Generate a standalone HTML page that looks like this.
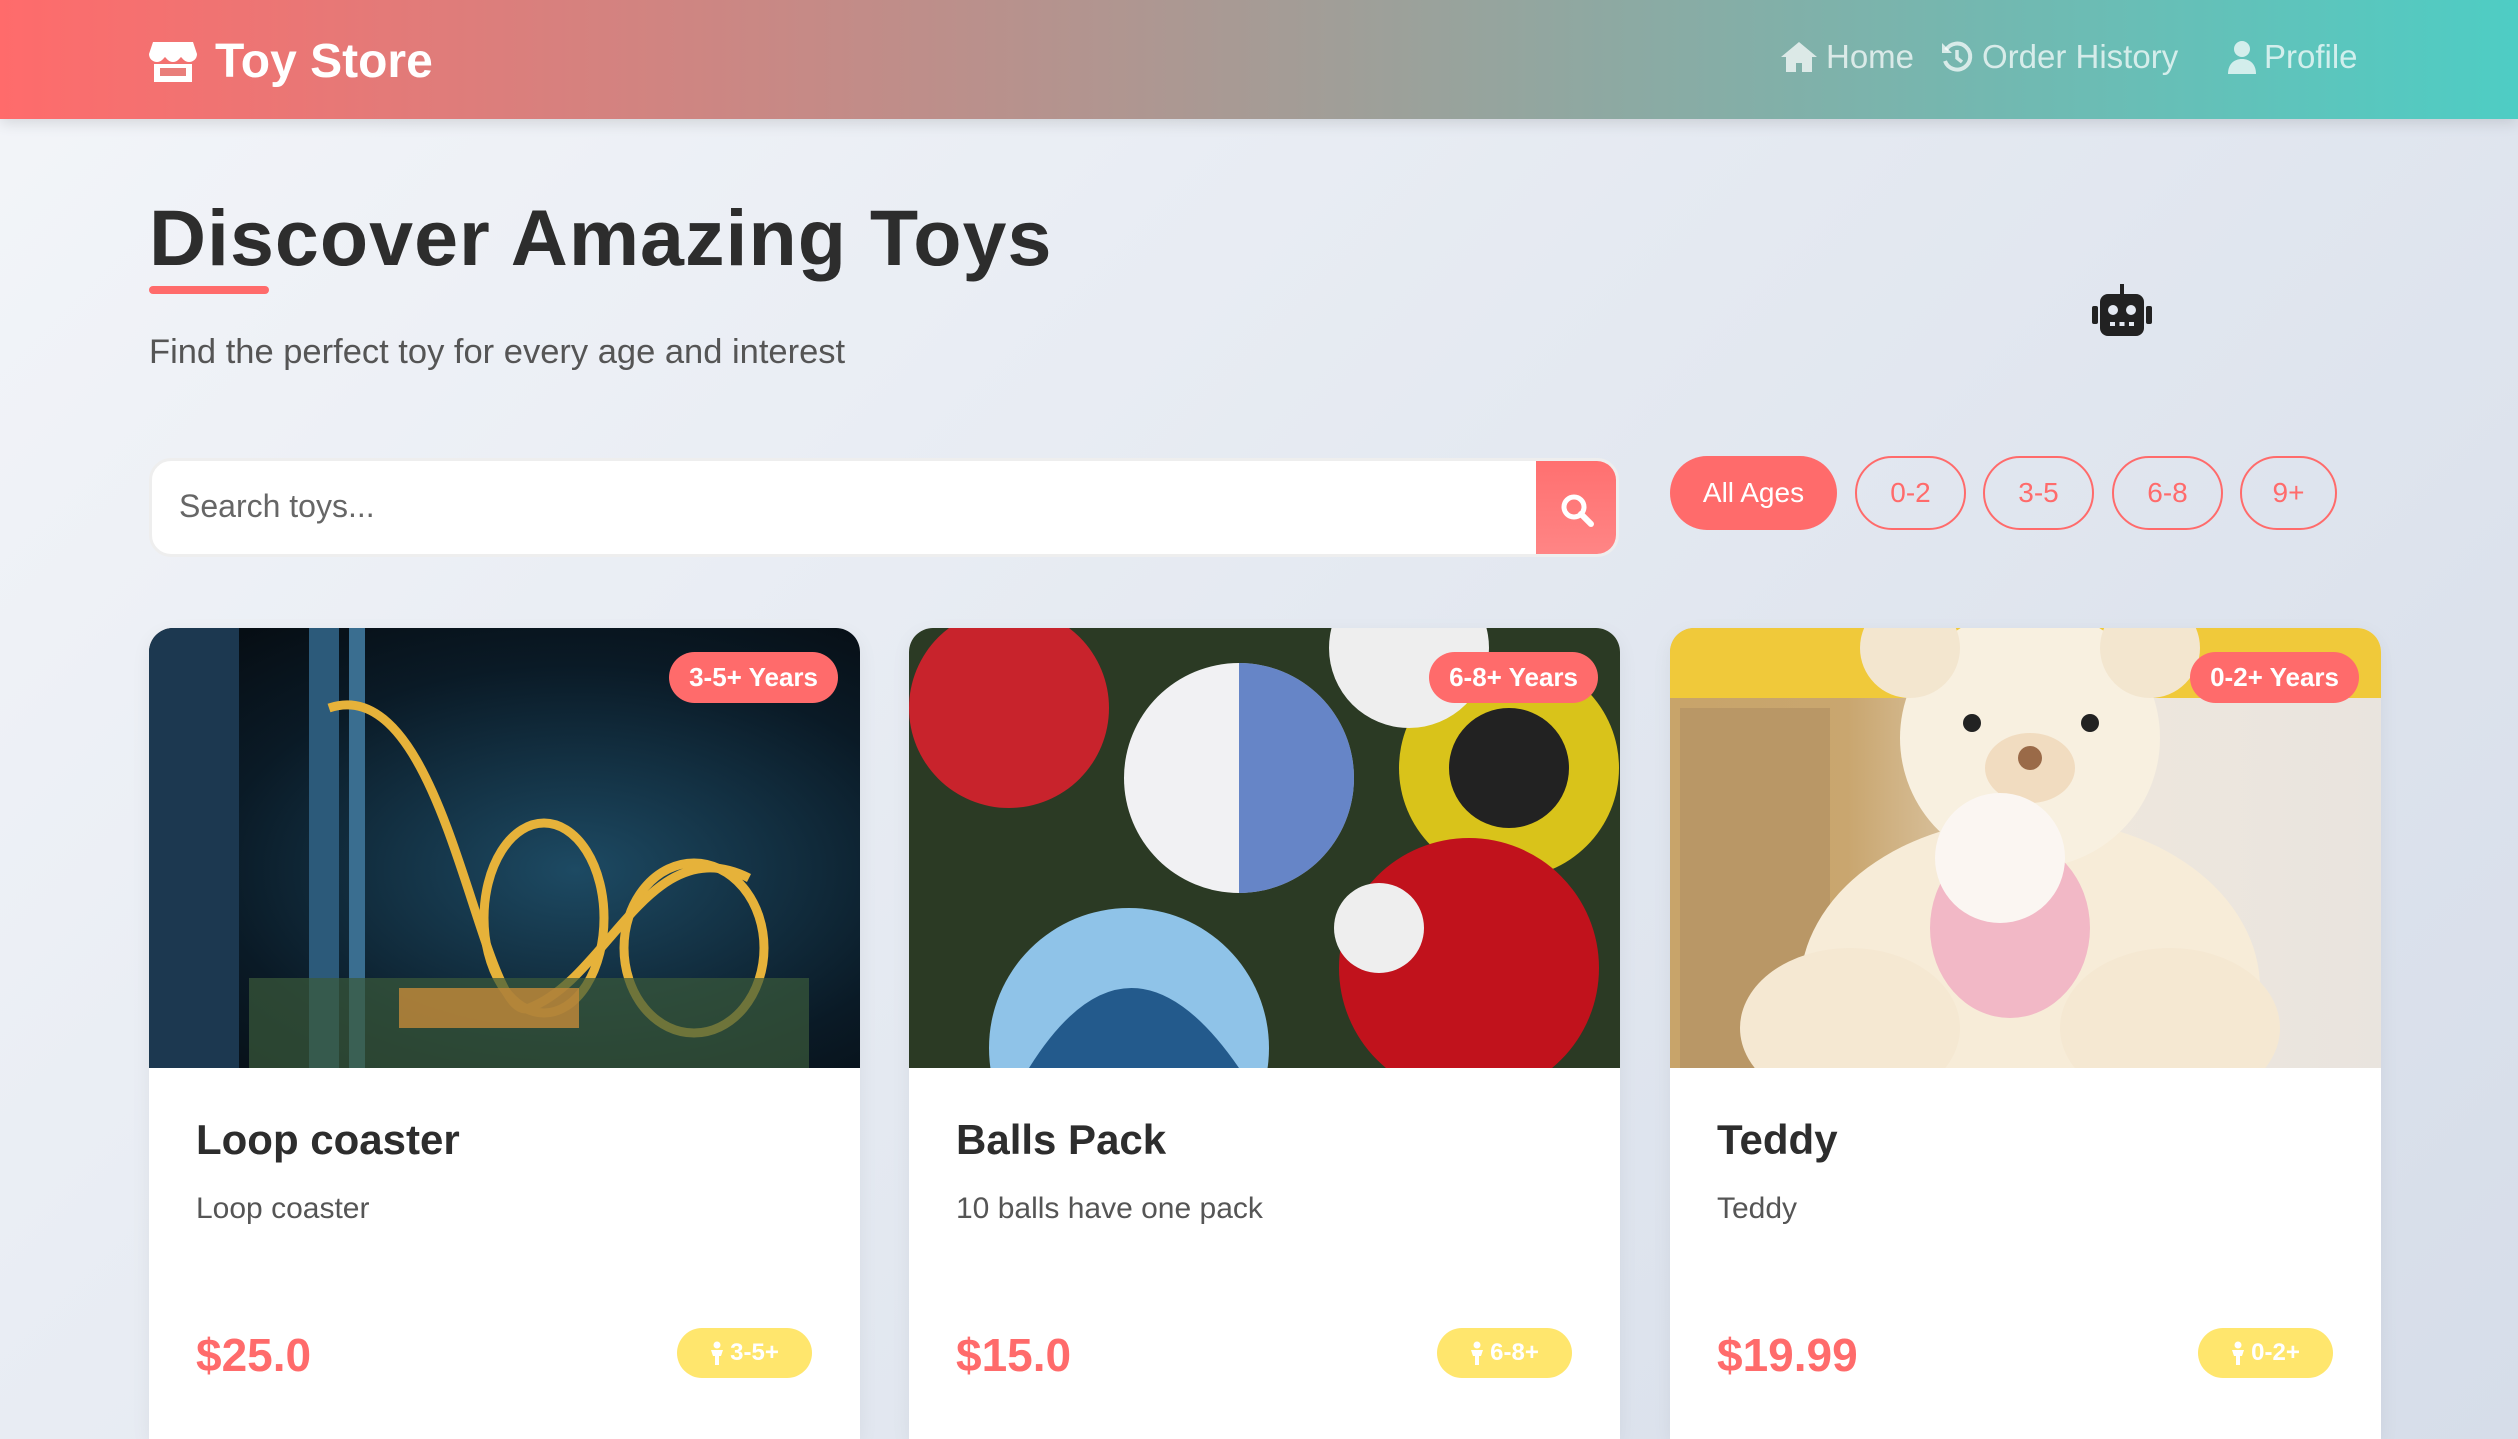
<!DOCTYPE html>
<html><head><meta charset="utf-8"><style>
*{box-sizing:border-box;margin:0;padding:0}
html{width:2518px;height:1439px;overflow:hidden}
body{width:2518px;height:1439px;overflow:hidden;font-family:"Liberation Sans",sans-serif;background:linear-gradient(135deg,#f3f5f9 0%,#e4e9f1 50%,#d6dde9 100%);position:relative;color:#333}
.hdr{position:absolute;left:0;top:0;width:2518px;height:119px;background:linear-gradient(90deg,#ff6b6b,#a69b95 50%,#4ecdc4);box-shadow:0 4px 14px rgba(0,0,0,.12)}
.logo{position:absolute;left:149px;top:34px;color:#fff;font-weight:bold;font-size:48px;display:flex;align-items:center;gap:18px}
.nav{position:absolute;top:38px;color:rgba(255,255,255,.72);font-size:33px;display:flex;align-items:center;gap:8px}
h1{position:absolute;left:149px;top:192px;font-size:79px;font-weight:bold;color:#2d2d2d;letter-spacing:1px}
.bar{position:absolute;left:149px;top:286px;width:120px;height:8px;border-radius:4px;background:#ff6b6b}
.sub{position:absolute;left:149px;top:333px;font-size:34.5px;color:#555}
.search{position:absolute;left:149px;top:458px;width:1470px;height:99px;background:#fff;border-radius:22px;border:3px solid #eee;overflow:hidden}
.search span{position:absolute;left:27px;top:27px;font-size:32px;color:#666}
.sbtn{position:absolute;right:0;top:0;width:80px;height:100%;background:linear-gradient(#ff7070,#ff8585)}
.pill{position:absolute;top:456px;height:74px;border:2px solid #ff6b6b;border-radius:37px;color:#ff6b6b;font-size:28px;display:flex;align-items:center;justify-content:center}
.card{position:absolute;top:628px;width:711px;height:811px;background:#fff;border-radius:24px 24px 0 0;overflow:hidden;box-shadow:0 6px 20px rgba(0,0,0,.06)}
.img{position:absolute;left:0;top:0;width:100%;height:440px;overflow:hidden}
.rib{position:absolute;top:24px;right:22px;height:51px;padding:0 20px;background:#ff6b6b;color:#fff;border-radius:26px;font-size:26px;font-weight:bold;display:flex;align-items:center}
.t{position:absolute;left:47px;top:488px;font-size:42px;font-weight:bold;color:#2d2d2d}
.d{position:absolute;left:47px;top:564px;font-size:30px;color:#555}
.p{position:absolute;left:47px;top:700px;font-size:46px;font-weight:bold;color:#ff6b6b}
.age{position:absolute;right:48px;top:700px;width:135px;height:50px;border-radius:25px;background:#ffe66d;color:#fff;font-size:24px;font-weight:bold;display:flex;align-items:center;justify-content:center;gap:6px}
</style></head><body>
<div class="hdr">
<div class="logo"><svg width="48" height="44" viewBox="0 0 48 44"><path d="M4 2h40l4 12c0 5-4 8-8 8s-6-3-8-5c-2 2-4 5-8 5s-6-3-8-5c-2 2-4 5-8 5s-8-3-8-8z" fill="#fff"/><path d="M5 24h38v18H5z" fill="#fff"/><rect x="11" y="28" width="26" height="8" fill="#e97e7a"/></svg>Toy Store</div>
<div class="nav" style="left:1780px"><svg width="38" height="32" viewBox="0 0 38 32"><path d="M19 1L1 16h5v15h10v-9h6v9h10V16h5z" fill="rgba(255,255,255,.72)"/></svg>Home</div>
<div class="nav" style="left:1940px"><svg width="34" height="34" viewBox="0 0 34 34"><path d="M6 10A13 13 0 1 1 5 21" stroke="rgba(255,255,255,.72)" stroke-width="4" fill="none"/><path d="M2 3v10h10z" fill="rgba(255,255,255,.72)"/><path d="M17 10v8l5 4" stroke="rgba(255,255,255,.72)" stroke-width="3.5" fill="none"/></svg>Order History</div>
<div class="nav" style="left:2228px"><svg width="28" height="34" viewBox="0 0 28 34"><circle cx="14" cy="9" r="8" fill="rgba(255,255,255,.72)"/><path d="M0 34c0-10 6-15 14-15s14 5 14 15z" fill="rgba(255,255,255,.72)"/></svg>Profile</div>
</div>
<h1>Discover Amazing Toys</h1>
<div class="bar"></div>
<div class="sub">Find the perfect toy for every age and interest</div>
<svg style="position:absolute;left:2090px;top:284px" width="64" height="54" viewBox="0 0 64 54"><rect x="30" y="0" width="4" height="10" fill="#222"/><rect x="10" y="10" width="44" height="42" rx="8" fill="#222"/><rect x="2" y="22" width="6" height="18" rx="2" fill="#222"/><rect x="56" y="22" width="6" height="18" rx="2" fill="#222"/><circle cx="23" cy="26" r="5" fill="#e4e9f1"/><circle cx="41" cy="26" r="5" fill="#e4e9f1"/><rect x="20" y="38" width="5" height="4" fill="#e4e9f1"/><rect x="29.5" y="38" width="5" height="4" fill="#e4e9f1"/><rect x="39" y="38" width="5" height="4" fill="#e4e9f1"/></svg>
<div class="search"><span>Search toys...</span><div class="sbtn"><svg style="position:absolute;left:24px;top:32px" width="34" height="34" viewBox="0 0 34 34"><circle cx="14" cy="14" r="10" stroke="#fff" stroke-width="5" fill="none"/><path d="M21 21l10 10" stroke="#fff" stroke-width="6" stroke-linecap="round"/></svg></div></div>
<div class="pill" style="left:1670px;width:167px;background:#ff6b6b;color:#fff;border:none">All Ages</div>
<div class="pill" style="left:1855px;width:111px">0-2</div>
<div class="pill" style="left:1983px;width:111px">3-5</div>
<div class="pill" style="left:2112px;width:111px">6-8</div>
<div class="pill" style="left:2240px;width:97px">9+</div>

<div class="card" style="left:149px"><div class="img" style="background:radial-gradient(ellipse at 60% 55%,#1d4a63,#0a1a26 60%,#05090d)">
<svg width="711" height="440"><rect x="0" y="0" width="90" height="440" fill="#1c3850"/><rect x="160" y="0" width="30" height="440" fill="#2c5a7a"/><rect x="200" y="0" width="16" height="440" fill="#3a6e90"/><g fill="none" stroke="#e6b23a" stroke-width="9"><ellipse cx="395" cy="290" rx="60" ry="95"/><ellipse cx="545" cy="320" rx="70" ry="85"/><path d="M180 80 C300 40 330 400 380 380 C460 350 500 200 600 250"/></g><rect x="100" y="350" width="560" height="90" fill="#3a5a3a" opacity=".7"/><rect x="250" y="360" width="180" height="40" fill="#c48a3a" opacity=".8"/></svg>
<div class="rib">3-5+ Years</div></div>
<div class="t">Loop coaster</div><div class="d">Loop coaster</div><div class="p">$25.0</div><div class="age"><svg width="14" height="24" viewBox="0 0 14 24"><circle cx="7" cy="4" r="3.5" fill="#fff"/><path d="M1 9h12l-2 6h-2v9H5v-9H3z" fill="#fff"/></svg>3-5+</div></div>

<div class="card" style="left:909px"><div class="img" style="background:#2b3a24">
<svg width="711" height="440"><circle cx="100" cy="80" r="100" fill="#c8232c"/><circle cx="330" cy="150" r="115" fill="#f1f1f3"/><path d="M330 35a115 115 0 0 1 0 230" fill="#2b57b3" opacity=".7"/><circle cx="600" cy="140" r="110" fill="#d9c31a"/><circle cx="600" cy="140" r="60" fill="#222"/><circle cx="500" cy="20" r="80" fill="#eee"/><circle cx="560" cy="340" r="130" fill="#c1121c"/><circle cx="470" cy="300" r="45" fill="#eee"/><circle cx="220" cy="420" r="140" fill="#8fc3e8"/><path d="M120 440 Q220 280 330 440" fill="#235a8c"/></svg>
<div class="rib">6-8+ Years</div></div>
<div class="t">Balls Pack</div><div class="d">10 balls have one pack</div><div class="p">$15.0</div><div class="age"><svg width="14" height="24" viewBox="0 0 14 24"><circle cx="7" cy="4" r="3.5" fill="#fff"/><path d="M1 9h12l-2 6h-2v9H5v-9H3z" fill="#fff"/></svg>6-8+</div></div>

<div class="card" style="left:1670px"><div class="img" style="background:linear-gradient(90deg,#c8a46a 0,#c9a66f 25%,#eee7dd 60%,#e9e4de)">
<svg width="711" height="440"><rect x="0" y="0" width="711" height="70" fill="#f0c93a"/><rect x="10" y="80" width="150" height="360" fill="#b99766"/><ellipse cx="360" cy="360" rx="230" ry="170" fill="#f7ecd8"/><circle cx="360" cy="110" r="130" fill="#f8f0e0"/><circle cx="240" cy="20" r="50" fill="#f3e6cf"/><circle cx="480" cy="20" r="50" fill="#f3e6cf"/><ellipse cx="360" cy="140" rx="45" ry="35" fill="#f1dcc0"/><circle cx="302" cy="95" r="9" fill="#222"/><circle cx="420" cy="95" r="9" fill="#222"/><circle cx="360" cy="130" r="12" fill="#9a6a48"/><ellipse cx="340" cy="300" rx="80" ry="90" fill="#f2b8c6"/><circle cx="330" cy="230" r="65" fill="#fbf6f2"/><ellipse cx="180" cy="400" rx="110" ry="80" fill="#f5e8d2"/><ellipse cx="500" cy="400" rx="110" ry="80" fill="#f5e8d2"/></svg>
<div class="rib">0-2+ Years</div></div>
<div class="t">Teddy</div><div class="d">Teddy</div><div class="p">$19.99</div><div class="age"><svg width="14" height="24" viewBox="0 0 14 24"><circle cx="7" cy="4" r="3.5" fill="#fff"/><path d="M1 9h12l-2 6h-2v9H5v-9H3z" fill="#fff"/></svg>0-2+</div></div>
</body></html>
